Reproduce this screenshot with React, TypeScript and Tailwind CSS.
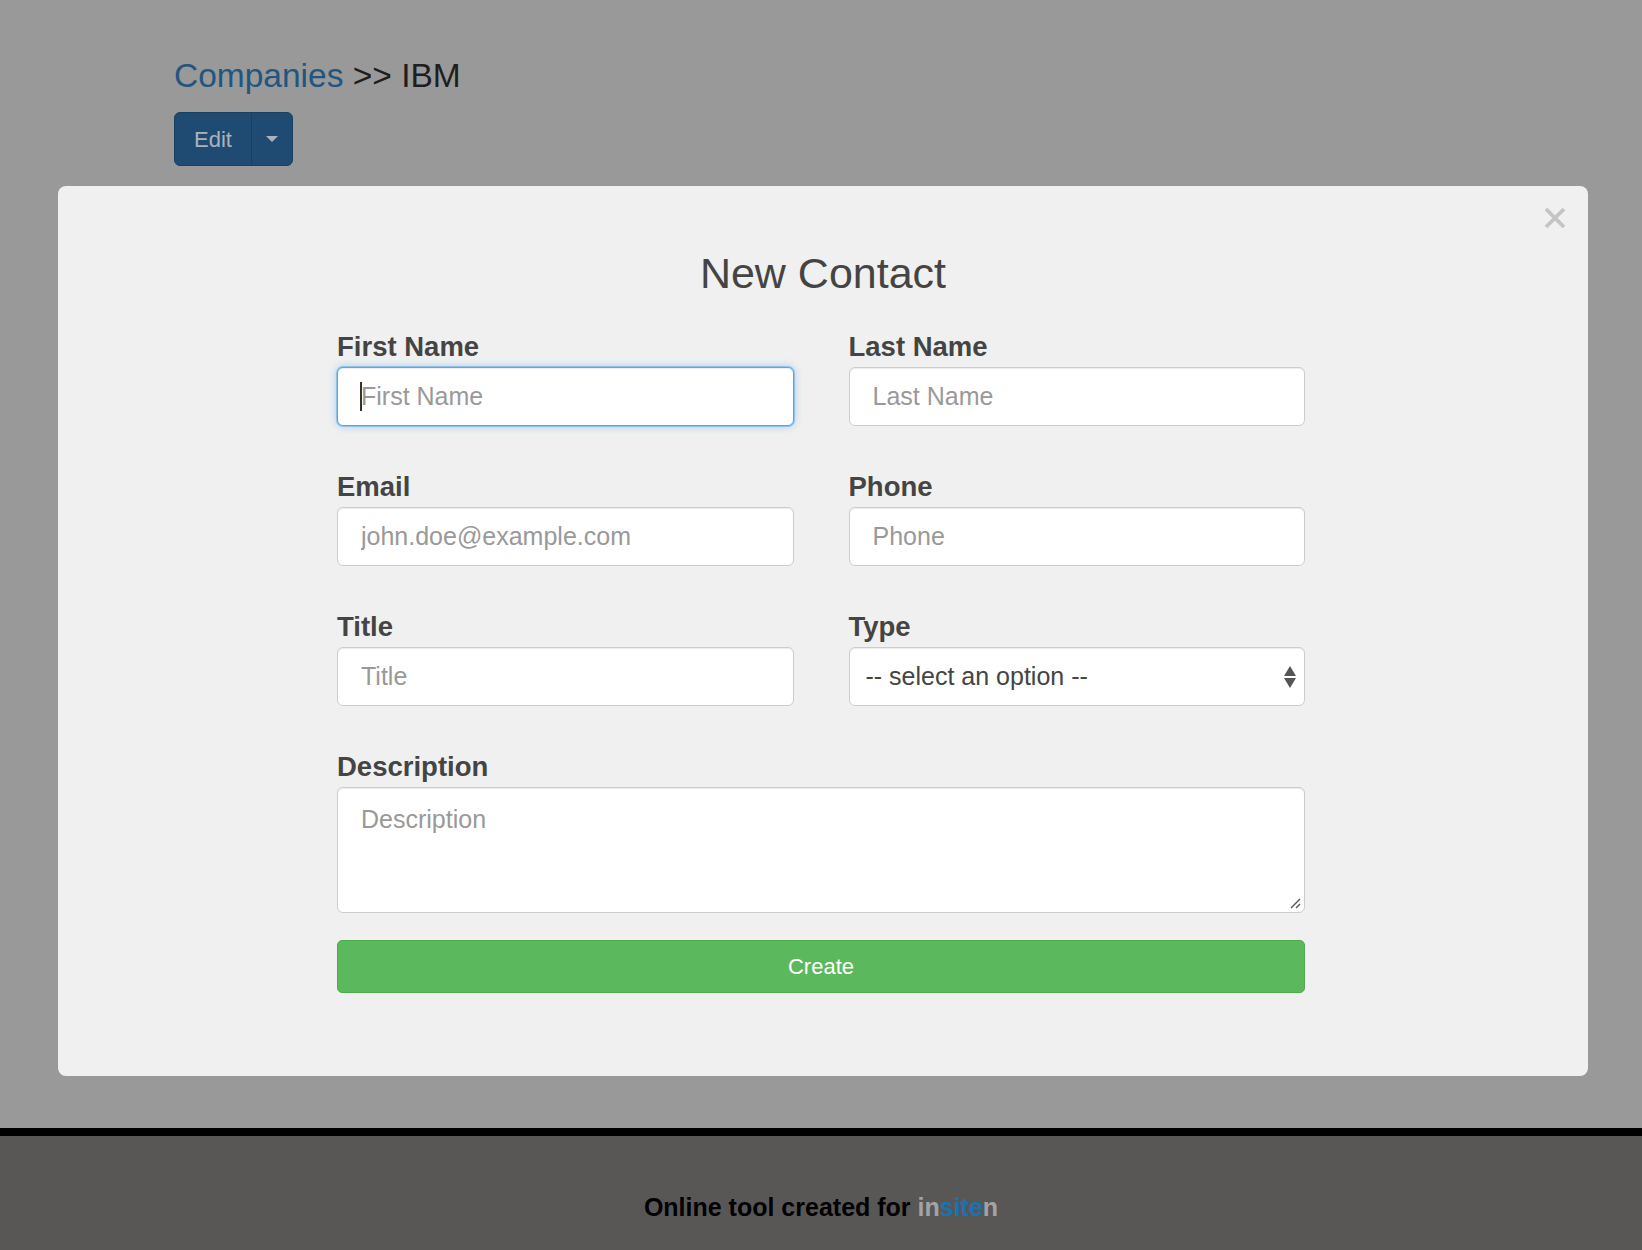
import React from "react";

function Field({ label, children }: { label: string; children: React.ReactNode }) {
  return (
    <div className="flex flex-col">
      <label className="text-[27.5px] leading-[32px] font-bold text-[#444444] mb-[4px]">{label}</label>
      {children}
    </div>
  );
}

const inputCls =
  "w-full h-[59px] bg-white border border-[#cccccc] rounded-[6px] px-[23px] text-[25px] text-[#555555] placeholder:text-[#999999] outline-none shadow-[inset_0_1px_1px_rgba(0,0,0,0.075)] font-['Liberation_Sans',Arial,sans-serif]";

export default function App() {
  return (
    <div className="min-h-[1250px] flex flex-col font-['Liberation_Sans',Arial,sans-serif]">
      <div className="bg-[#999999] h-[1128px]">
        <div className="pl-[174px] pt-[56px]">
          <h1 className="text-[33.5px] leading-[40px] font-normal">
            <span className="text-[#22557f]">Companies</span>
            <span className="text-[#1e1e1e]"> &gt;&gt; IBM</span>
          </h1>
          <div className="mt-[16px] flex h-[54px] w-[119px] rounded-[6px] bg-[#1f4a71] border border-[#1b4162] overflow-hidden">
            <div className="w-[77px] flex items-center justify-center text-[22px] text-[#aab3bd] border-r border-[#1a3f60]">
              Edit
            </div>
            <div className="flex-1 flex items-center justify-center">
              <svg width="12" height="6" viewBox="0 0 12 6">
                <polygon points="0,0 12,0 6,6" fill="#aab3bd" />
              </svg>
            </div>
          </div>
        </div>

        <div className="relative ml-[58px] mt-[20px] w-[1530px] h-[890px] rounded-[8px] bg-[#f0f0f0] pt-[63px]">
          <div className="absolute top-[20px] right-[21px] w-[24px] h-[24px]">
            <svg width="24" height="24" viewBox="0 0 24 24">
              <path d="M3 3 L21 21 M21 3 L3 21" stroke="#c4c4c4" strokeWidth="3.8" strokeLinecap="butt" />
            </svg>
          </div>
          <h2 className="text-center text-[43px] leading-[48px] font-normal text-[#444444]">New Contact</h2>

          <div className="ml-[279px] w-[968px] mt-[34px]">
            <div className="grid grid-cols-2 gap-x-[55px] gap-y-[45px]">
              <Field label="First Name">
                <div className="relative">
                  <input
                    className={inputCls + " !border-[#5aa7e6] !shadow-[inset_0_1px_1px_rgba(0,0,0,0.075),0_0_0_1px_rgba(102,175,233,0.6),0_0_8px_rgba(102,175,233,0.6)]"}
                    placeholder="First Name"
                    readOnly
                  />
                  <span className="absolute left-[23px] top-[15px] w-[2px] h-[29px] bg-[#333333]" />
                </div>
              </Field>
              <Field label="Last Name">
                <input className={inputCls} placeholder="Last Name" readOnly />
              </Field>
              <Field label="Email">
                <input className={inputCls} placeholder="john.doe@example.com" readOnly />
              </Field>
              <Field label="Phone">
                <input className={inputCls} placeholder="Phone" readOnly />
              </Field>
              <Field label="Title">
                <input className={inputCls} placeholder="Title" readOnly />
              </Field>
              <Field label="Type">
                <div className="relative w-full h-[59px] bg-white border border-[#cccccc] rounded-[6px] pl-[16px] flex items-center text-[25px] text-[#444444] shadow-[inset_0_1px_1px_rgba(0,0,0,0.075)]">
                  -- select an option --
                  <svg className="absolute right-[8px] top-[18px]" width="12" height="22" viewBox="0 0 12 22">
                    <polygon points="0,10 6,0 12,10" fill="#555555" />
                    <polygon points="0,12 12,12 6,22" fill="#555555" />
                  </svg>
                </div>
              </Field>
            </div>

            <div className="mt-[45px] flex flex-col">
              <label className="text-[27.5px] leading-[32px] font-bold text-[#444444] mb-[4px]">Description</label>
              <div className="relative">
                <textarea
                  className="block w-full h-[126px] resize-none bg-white border border-[#cccccc] rounded-[6px] px-[23px] pt-[16px] text-[25px] leading-[30px] text-[#555555] placeholder:text-[#999999] outline-none shadow-[inset_0_1px_1px_rgba(0,0,0,0.075)] font-['Liberation_Sans',Arial,sans-serif]"
                  placeholder="Description"
                  readOnly
                />
                <svg className="absolute right-[4px] bottom-[4px]" width="12" height="12" viewBox="0 0 12 12">
                  <path d="M11 2 L2 11 M11 7 L7 11" stroke="#555555" strokeWidth="1.4" />
                </svg>
              </div>
            </div>

            <button className="mt-[27px] w-full h-[53px] rounded-[5px] bg-[#5cb85c] border border-[#4cae4c] text-white text-[22px] flex items-center justify-center">
              Create
            </button>
          </div>
        </div>
      </div>
      <div className="h-[8px] bg-black" />
      <footer className="bg-[#585756] pt-[56px] pb-[28px] text-center">
        <p className="text-[25px] leading-[30px] font-bold text-black">
          Online tool created for{" "}
          <span className="text-[#a3a3a3]">in</span>
          <span className="text-[#1a72b0]">site</span>
          <span className="text-[#a3a3a3]">n</span>
        </p>
      </footer>
    </div>
  );
}
